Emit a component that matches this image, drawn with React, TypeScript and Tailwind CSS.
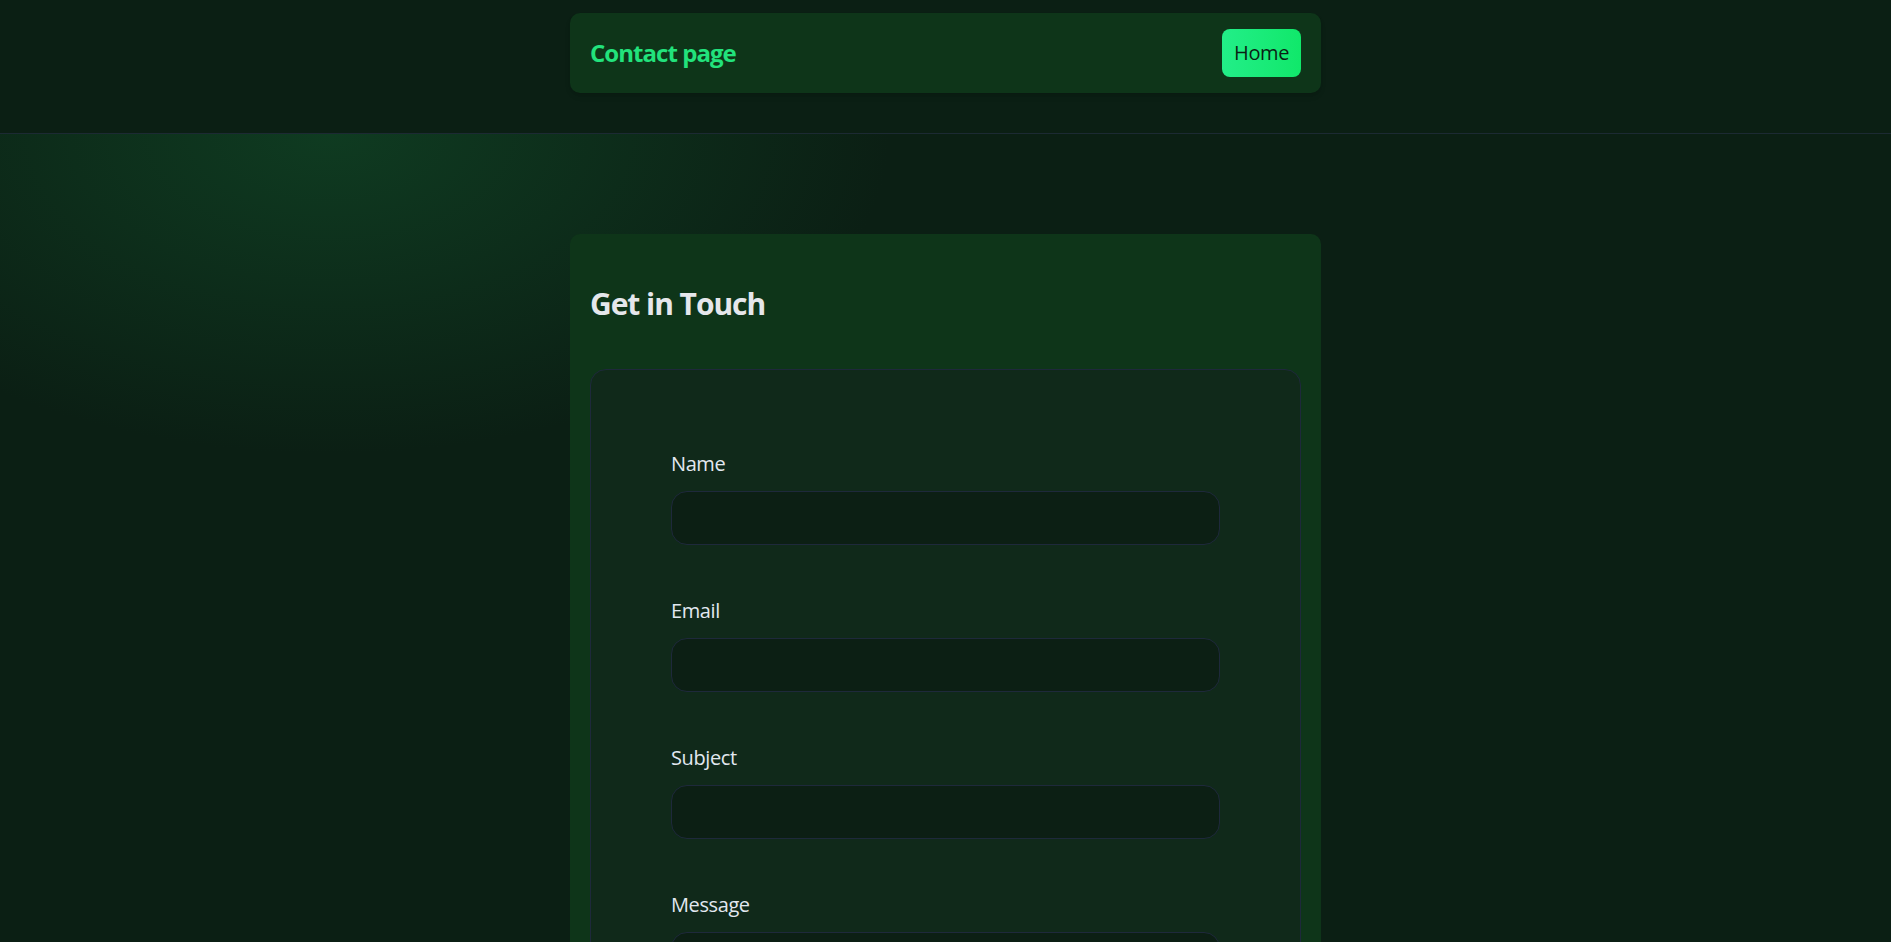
import React, { useState, ChangeEvent } from 'react';

type Field = { name: string; label: string; type: string };

const fields: Field[] = [
  { name: 'name', label: 'Name', type: 'text' },
  { name: 'email', label: 'Email', type: 'email' },
  { name: 'subject', label: 'Subject', type: 'text' },
];

const App: React.FC = () => {
  const [form, setForm] = useState<Record<string, string>>({
    name: '',
    email: '',
    subject: '',
    message: '',
  });

  const handleChange = (e: ChangeEvent<HTMLInputElement | HTMLTextAreaElement>) => {
    const { name, value } = e.target;
    setForm(prev => ({ ...prev, [name]: value }));
  };

  return (
    <div className="min-h-screen bg-[#0b1f14] [font-family:'Open_Sans',sans-serif] text-[#e2e8f0]">
      {/* Top bar */}
      <header className="border-b border-[#1c2a33] pt-[13px] pb-10">
        <nav className="mx-auto flex h-20 w-[751px] items-center justify-between rounded-[10px] bg-[#0e3519] px-5 shadow-md">
          <h1 className="text-2xl font-bold tracking-[-0.04em] text-[#22e27c]">Contact page</h1>
          <button className="rounded-lg bg-gradient-to-r from-[#22ee88] to-[#10e86a] px-3 py-2.5 text-xl leading-7 font-medium tracking-[-0.02em] text-[#0b1f14]">
            Home
          </button>
        </nav>
      </header>

      {/* Form section */}
      <main className="bg-[radial-gradient(ellipse_560px_320px_at_330px_0px,#0f3b21,transparent)] pt-[100px] pb-24">
        <section className="mx-auto w-[751px] rounded-[10px] bg-[#0e3519] p-5">
          <h2 className="mt-8 mb-[47px] text-3xl leading-9 font-bold tracking-[-0.035em] text-[#e5e7eb]">
            Get in Touch
          </h2>

          <form className="flex flex-col gap-[52px] rounded-2xl border border-[#1e293b] bg-[#10291a] p-20">
            {fields.map(field => (
              <div key={field.name}>
                <label className="mb-[13px] block text-xl leading-7 tracking-[-0.02em] text-[#e2e8f0]">
                  {field.label}
                </label>
                <input
                  type={field.type}
                  name={field.name}
                  value={form[field.name]}
                  onChange={handleChange}
                  className="block h-[54px] w-full rounded-2xl border border-[#1e293b] bg-[#0c1f14] px-4 text-lg text-white outline-none"
                />
              </div>
            ))}

            <div>
              <label className="mb-[13px] block text-xl leading-7 tracking-[-0.02em] text-[#e2e8f0]">Message</label>
              <textarea
                name="message"
                rows={5}
                value={form.message}
                onChange={handleChange}
                className="block w-full rounded-2xl border border-[#1e293b] bg-[#0c1f14] px-4 py-3 text-lg text-white outline-none"
              />
            </div>

            <button
              type="button"
              className="self-start rounded-lg bg-gradient-to-r from-[#22ee88] to-[#10e86a] px-6 py-3 text-xl font-semibold text-[#0b1f14]"
            >
              Send Message
            </button>
          </form>
        </section>
      </main>
    </div>
  );
};

export default App;
